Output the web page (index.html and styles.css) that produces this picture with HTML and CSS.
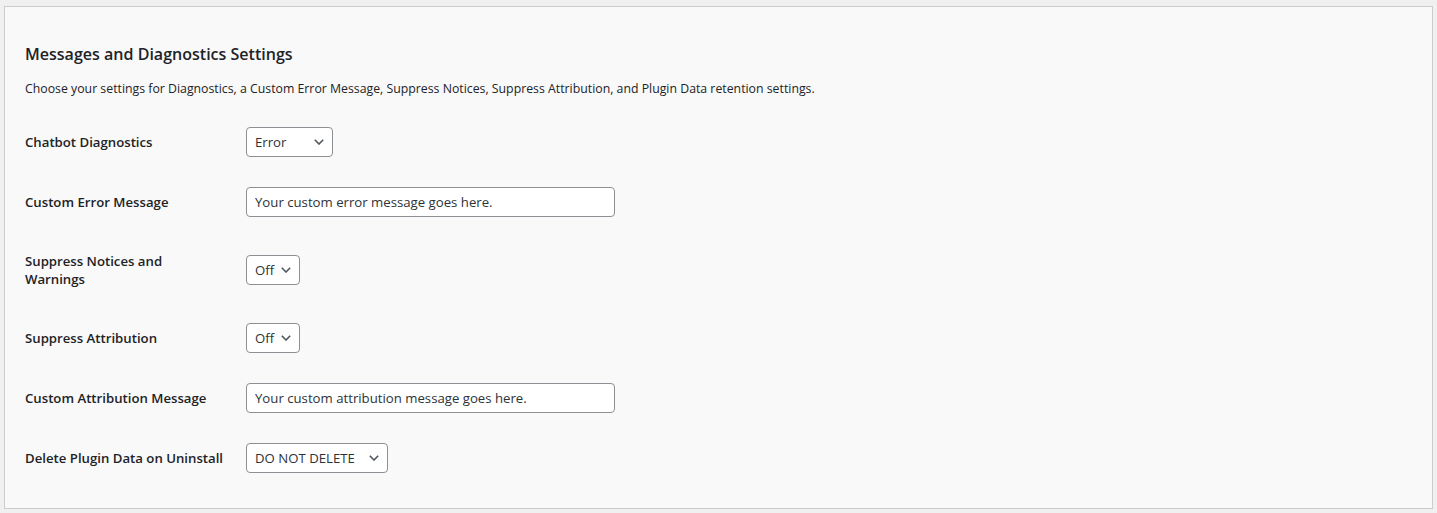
FILE: index.html
```html
<!DOCTYPE html>
<html lang="en">
<head>
<meta charset="utf-8">
<title>Messages and Diagnostics Settings</title>
<link rel="stylesheet" href="styles.css">
</head>
<body>
<div class="page">
  <div class="panel">
    <h2 class="title">Messages and Diagnostics Settings</h2>
    <p class="desc">Choose your settings for Diagnostics, a Custom Error Message, Suppress Notices, Suppress Attribution, and Plugin Data retention settings.</p>
    <div class="form">
      <div class="row">
        <div class="label">Chatbot Diagnostics</div>
        <div class="field">
          <select class="sel sel-error"><option>Error</option><option>Success</option><option>Failure</option></select>
        </div>
      </div>
      <div class="row">
        <div class="label">Custom Error Message</div>
        <div class="field">
          <input class="text" type="text" value="Your custom error message goes here.">
        </div>
      </div>
      <div class="row">
        <div class="label">Suppress Notices and<br>Warnings</div>
        <div class="field">
          <select class="sel sel-off"><option>Off</option><option>On</option></select>
        </div>
      </div>
      <div class="row">
        <div class="label">Suppress Attribution</div>
        <div class="field">
          <select class="sel sel-off"><option>Off</option><option>On</option></select>
        </div>
      </div>
      <div class="row">
        <div class="label">Custom Attribution Message</div>
        <div class="field">
          <input class="text" type="text" value="Your custom attribution message goes here.">
        </div>
      </div>
      <div class="row">
        <div class="label">Delete Plugin Data on Uninstall</div>
        <div class="field">
          <select class="sel sel-delete"><option>DO NOT DELETE</option><option>DELETE ALL DATA</option></select>
        </div>
      </div>
    </div>
  </div>
</div>
</body>
</html>
```
FILE: styles.css
```css
html, body {
  margin: 0;
  padding: 0;
}
body {
  background: #f0f0f1;
  color: #1d2327;
  font-family: "Open Sans", "Noto Sans", sans-serif;
  font-size: 13px;
}
.page {
  padding: 6px 4px 4px 4px;
}
.panel {
  background: #f9f9f9;
  border: 1px solid #cccccc;
  padding: 36px 20px 20px 20px;
}
.title {
  margin: 0;
  font-size: 16.05px;
  font-weight: 600;
  line-height: 22px;
  color: #1d2327;
}
.desc {
  margin: 14px 0 13px 0;
  font-size: 12.3px;
  line-height: 20px;
  color: #1d2327;
}
.row {
  display: grid;
  grid-template-columns: 221px 1fr;
  align-items: center;
}
.label {
  padding: 20px 0;
  font-size: 13.2px;
  font-weight: 600;
  line-height: 18px;
  white-space: nowrap;
  color: #1d2327;
}
.field {
  padding: 15px 0;
  display: flex;
}
.text, .sel {
  box-sizing: border-box;
  height: 30px;
  margin: 0;
  border: 1px solid #8c8f94;
  border-radius: 4px;
  background-color: #fff;
  color: #2c3338;
  font-family: inherit;
  font-size: 13.2px;
  line-height: 28px;
  padding: 0 8px;
  outline: none;
}
.text {
  width: 369px;
}
.sel {
  -webkit-appearance: none;
  appearance: none;
  padding: 0 24px 0 8px;
  background-image: url("data:image/svg+xml,%3Csvg xmlns='http://www.w3.org/2000/svg' width='10' height='6' viewBox='0 0 10 6'%3E%3Cpolyline points='0.8,0.8 5,5 9.2,0.8' fill='none' stroke='%2350575e' stroke-width='1.6'/%3E%3C/svg%3E");
  background-repeat: no-repeat;
  background-size: 10px 6px;
  background-position: right 8px center;
}
.sel-error { width: 87px; }
.sel-off { width: 54px; }
.sel-delete { width: 142px; }
```
